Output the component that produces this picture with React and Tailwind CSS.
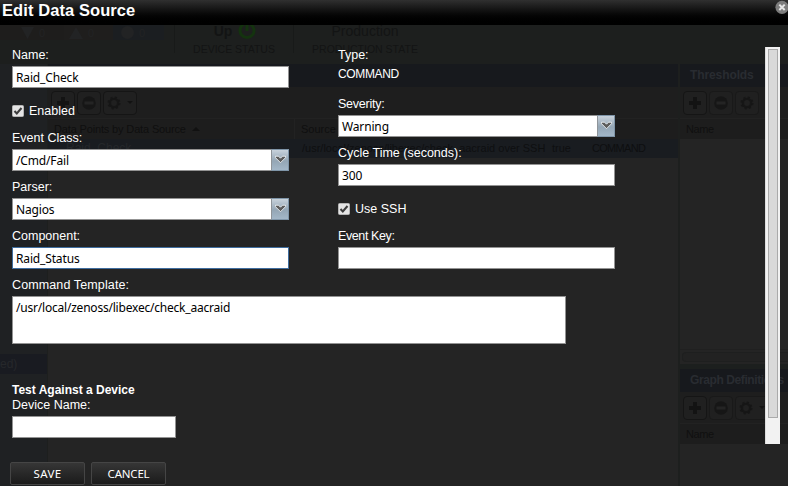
import React from 'react';

const ARIAL = "font-['Liberation_Sans',Arial,sans-serif]";

function Plus() {
  return <svg width="12" height="12" viewBox="0 0 12 12" className="fill-[#131313]"><path d="M4 0h4v4h4v4H8v4H4V8H0V4h4z" /></svg>;
}
function Minus() {
  return <svg width="14" height="14" viewBox="0 0 14 14"><circle cx="7" cy="7" r="6.8" className="fill-[#161616]" /><path d="M2.5 5.5h9v3h-9z" className="fill-[#242424]" /></svg>;
}
function Gear() {
  return (
    <svg width="14" height="14" viewBox="-7 -7 14 14" fill="none" className="stroke-[#161616]">
      <circle r="4.1" strokeWidth="2.4" />
      <circle r="5.6" strokeWidth="1.8" strokeDasharray="2.2 2.2" />
    </svg>
  );
}
function GhostButton({ children, wide, strong }) {
  return (
    <div className={`flex h-6 shrink-0 items-center justify-center gap-1.5 rounded-sm border ${strong ? 'border-[#151515]' : 'border-[#191919]'} bg-[#202020] ${wide ? 'w-[34px]' : 'w-6'}`}>
      {children}
    </div>
  );
}
function Toolbar({ caret, strong }) {
  return (
    <div className="flex h-[31px] shrink-0 items-center gap-0.5 bg-[#1e1e1e] pl-[3px]">
      <GhostButton strong><Plus /></GhostButton>
      <GhostButton strong={strong}><Minus /></GhostButton>
      <GhostButton wide={caret} strong={strong}>
        <Gear />
        {caret && <span className="border-x-[3px] border-t-[3px] border-x-transparent border-t-[#121212]" />}
      </GhostButton>
    </div>
  );
}
function SidePanel({ title, caret, className, tracking }) {
  return (
    <section className={`flex flex-col ${className}`}>
      <h2 className={`h-[23px] shrink-0 bg-[#17191d] pl-2.5 text-[12px] font-bold leading-[23px] text-[#292c31] ${tracking}`}>{title}</h2>
      <Toolbar caret={caret} />
      <div className="h-[21px] shrink-0 border-t border-[#222] bg-[#1d1d1d] pl-[6px] text-[11px] leading-[21px] tracking-[-0.4px] text-[#101010]">Name</div>
    </section>
  );
}

function EventCount({ className, children }) {
  return <div className={`flex items-center gap-[5px] ${className}`}>{children}<span>0</span></div>;
}

function Backdrop() {
  return (
    <div className="flex h-[486px] w-[788px] flex-col bg-[#1d1f1e] text-[#131414]">
      <header className="flex h-16 shrink-0 items-start pt-[25px]">
        <div className="flex h-[15px] w-[174px] text-[11px] leading-[14px] text-[#222324]">
          <EventCount className="w-[64px] bg-[#1e1d1c] pl-[21px]"><svg width="13" height="12" viewBox="0 0 13 12" fill="currentColor"><path d="M0 0h13L6.500 12z" /></svg></EventCount>
          <EventCount className="w-[49px] bg-[#1f1e1d] pl-[5px]"><svg width="14" height="12" viewBox="0 0 14 12" fill="currentColor"><path d="M7 0l7 12H0z" /></svg></EventCount>
          <EventCount className="w-[51px] bg-[#1b1e21] pl-[8px]"><svg width="13" height="13" viewBox="0 0 13 13" fill="currentColor"><circle cx="6.500" cy="6.500" r="6.500" /></svg></EventCount>
        </div>
        <div className="flex h-[28px] w-[120px] flex-col items-center border-x border-[#181a19]">
          <div className="-mt-[2px] flex h-[16px] items-center gap-1.5 pl-[2px] text-[14px] font-bold">
            Up
            <svg width="18" height="18" viewBox="0 0 18 18" fill="none" strokeWidth="3" className="stroke-[#14330f]"><path d="M5.5 2.500a7 7 0 1 0 7 0M9 1v8" /></svg>
          </div>
          <div className="mt-[3px] text-[10.5px] leading-[14px]">DEVICE STATUS</div>
        </div>
        <div className="w-[142px] text-center">
          <div className="-mt-px h-[15px] text-[14px] leading-[15px]">Production</div>
          <div className="mt-[3px] text-[10.5px] leading-[14px]">PRODUCTION STATE</div>
        </div>
      </header>
      <div className="flex min-h-0 flex-1">
        <aside className="w-[47px] bg-[#1f2123] pt-[290px]">
          <div className="h-5 overflow-hidden bg-[#191b21] text-[12px] leading-5 text-[#26282b]">ed)</div>
        </aside>
        <main className="ml-[1px] w-[630px] overflow-hidden bg-[#242424]">
          <div className="h-[23px] bg-[#17191d]" />
          <Toolbar caret strong />
          <div className="flex h-[21px] border-t border-[#222] bg-[#1d1d1d] text-[11px] leading-[21px] text-[#0f0f0f]">
            <div className="flex w-[247px] items-center gap-1.5 border-r border-[#222] pl-[6px]"><span className="tracking-[-0.15px]">Data Points by Data Source</span><span className="border-x-[4px] border-b-[4px] border-x-transparent border-b-[#111]" /></div>
            <div className="w-[296px] pl-[6px]">Source</div>
            <div>Type</div>
          </div>
          <div className="flex h-[19px] bg-[#191c20] text-[11px] leading-[19px] text-[#0e0f10]">
            <div className="w-[254px] pl-[18px] text-[12px] text-[#24272a]">Raid_Check</div>
            <div className="w-[250px] whitespace-nowrap">/usr/local/zenoss/libexec/check_aacraid over SSH</div>
            <div className="w-[40px]">true</div>
            <div className="tracking-[-0.7px]">COMMAND</div>
          </div>
        </main>
        <div className="ml-[2px] flex w-[108px] flex-col overflow-hidden whitespace-nowrap bg-[#242424]">
          <SidePanel title="Thresholds" tracking="tracking-[-0.1px]" className="h-[285px]" />
          <div className="flex h-[20px] flex-col border-b-[5px] border-t border-b-[#1c1f1e] border-t-[#202020] pl-0.5 pt-0.5">
            <div className="h-[10px] rounded-l-sm border border-r-0 border-[#1e1f1f] bg-[#222]" />
          </div>
          <SidePanel title="Graph Definitions" tracking="tracking-[-0.4px]" caret className="flex-1" />
        </div>
      </div>
    </div>
  );
}

function Field({ label, value = '', combo, focus, width = 'w-[277px]', height = 'h-[22px]', labelTracking = '', valueTracking = 'tracking-[-0.15px]' }) {
  return (
    <label className={`flex flex-col ${width}`}>
      <span className={`h-[18px] text-[12.5px] leading-[14px] ${labelTracking}`}>{label}</span>
      <span className={`flex border ${focus ? 'border-[#3f6d9e]' : 'border-[#939393]'} bg-white ${height}`}>
        <span className={`flex-1 pl-[3px] font-['Noto_Sans',sans-serif] text-[12px] leading-[22px] text-black ${valueTracking}`}>{value}</span>
        {combo && (
          <span className="-my-px -mr-px flex w-[18px] justify-center border border-[#7f95a8] border-l-[#8f9499] bg-linear-to-b from-[#c8d2db] from-0% via-[#94a6b5] via-55% to-[#a3b7c8] pt-[5px]">
            <svg width="11" height="9" viewBox="0 0 11 9"><path d="M.5 1.200h3l2 2 2-2h3v1.500L5.500 7.700.500 2.700z" fill="#5c5c5c" stroke="#eef2f5" strokeWidth=".9" /></svg>
          </span>
        )}
      </span>
    </label>
  );
}
function Check({ label }) {
  return (
    <div className="flex h-[14px] items-center gap-[5px] text-[12.5px]">
      <svg width="12" height="12" viewBox="0 0 12 12"><rect x=".5" y=".5" width="11" height="11" rx="1" fill="#e4e4e4" stroke="#b5b5b5" /><path d="M2.5 6l2.3 2.5L9.5 3" fill="none" stroke="#3c3c3c" strokeWidth="2" /></svg>
      {label}
    </div>
  );
}
function DialogButton({ children, tracking }) {
  return <button className={`h-[23px] w-[75px] rounded-xs border border-[#454545] bg-linear-to-b from-[#363636] to-[#1b1b1b] font-['Noto_Sans',sans-serif] text-[11.5px] leading-[21px] text-white ${tracking}`}>{children}</button>;
}

export default function App() {
  return (
    <div className={`relative h-[486px] w-[788px] overflow-hidden ${ARIAL}`}>
      <Backdrop />
      <div className="absolute inset-0 flex flex-col text-white">
        <div className="flex h-[25px] shrink-0 justify-between bg-linear-to-b from-[#303030] to-black pl-[2px]">
          <h1 className="text-[16.5px] font-bold leading-[21px] tracking-[0.08px]">Edit Data Source</h1>
          <svg width="14" height="14" viewBox="0 0 14 14" className="-mr-px"><circle cx="7" cy="7.300" r="6.600" fill="#7d7d7d" /><path d="M4.300 4.600l5.400 5.400M9.700 4.600l-5.400 5.400" stroke="#e6e6e6" strokeWidth="2" /></svg>
        </div>
        <div className="flex justify-between pl-3 pr-2 pt-[22px]">
          <div>
            <div className="flex gap-[49px]">
              <div className="flex flex-col">
                <div className="pt-px"><Field label="Name:" value="Raid_Check" /></div>
                <div className="pt-4"><Check label="Enabled" /></div>
                <div className="flex flex-col gap-[9px] pt-[13px]">
                  <Field label="Event Class:" value="/Cmd/Fail" combo />
                  <Field label="Parser:" value="Nagios" combo />
                  <Field label="Component:" value="Raid_Status" focus />
                </div>
              </div>
              <div className="flex flex-col">
                <div className="h-[49px] pt-px text-[12.5px] leading-[14px]">
                  <div className="h-[19px]">Type:</div>
                  <div className="text-[12px] tracking-[-0.35px]">COMMAND</div>
                </div>
                <div className="flex flex-col gap-[9px] pt-px">
                  <Field label="Severity:" value="Warning" combo labelTracking="tracking-[-0.25px]" />
                  <Field label="Cycle Time (seconds):" value="300" />
                </div>
                <div className="pb-[13px] pt-4"><Check label="Use SSH" /></div>
                <Field label="Event Key:" labelTracking="tracking-[-0.4px]" />
              </div>
            </div>
            <div className="pt-[9px]"><Field label="Command Template:" value="/usr/local/zenoss/libexec/check_aacraid" width="w-[554px]" height="h-[48px]" labelTracking="tracking-[0.12px]" valueTracking="tracking-[-0.21px]" /></div>
            <div className="pt-[39px] text-[12px] font-bold leading-[15px]">Test Against a Device</div>
            <Field label="Device Name:" width="w-[164px]" />
          </div>
          <div className="h-[397px] w-[15px] border-l border-[#ddd] bg-[#f2f2f2] pl-[2px] pt-[2px]">
            <div className="h-[369px] w-[10px] border border-[#aaa] bg-[#d9d9d9]" />
          </div>
        </div>
        <div className="flex gap-[6px] pl-[10px] pt-[18px]">
          <DialogButton tracking="tracking-[0.4px]">SAVE</DialogButton>
          <DialogButton tracking="tracking-[-0.2px]">CANCEL</DialogButton>
        </div>
      </div>
    </div>
  );
}
